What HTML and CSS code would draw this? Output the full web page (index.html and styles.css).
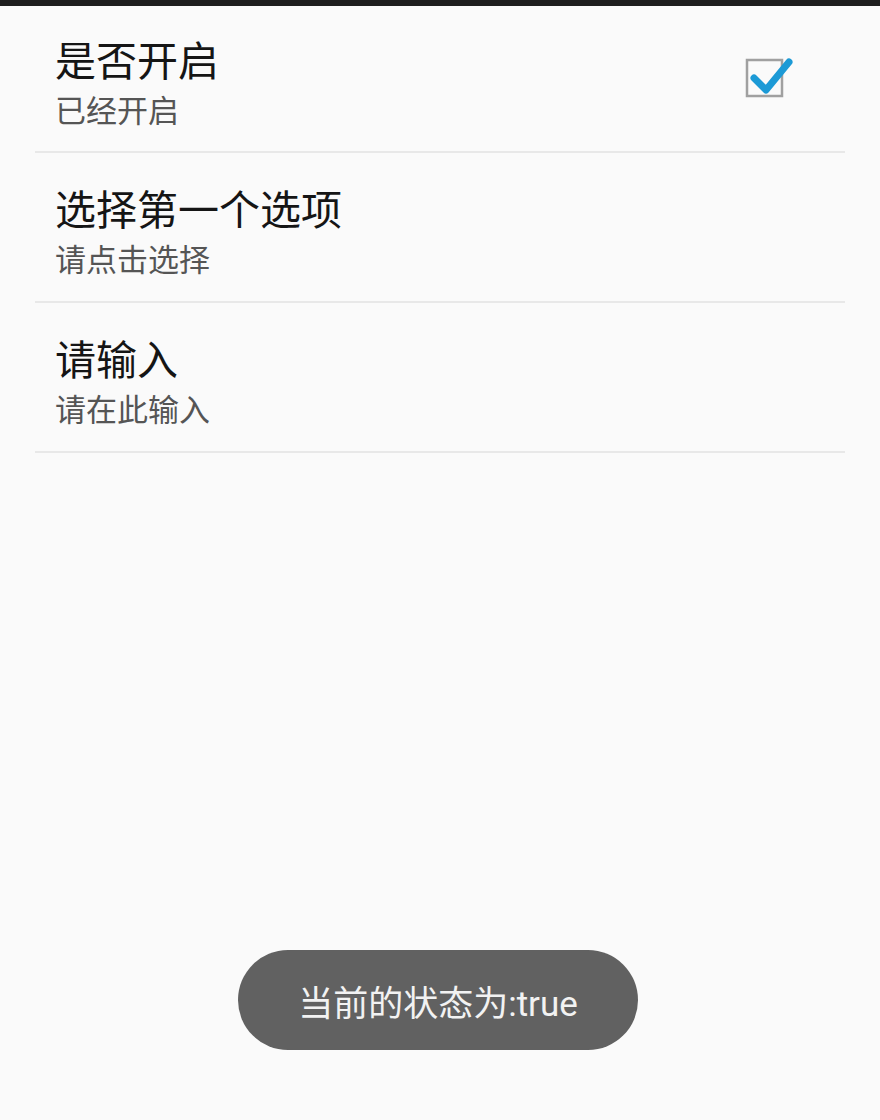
FILE: index.html
```html
<!DOCTYPE html>
<html lang="zh-CN">
<head>
  <meta charset="UTF-8">
  <meta name="viewport" content="width=device-width, initial-scale=1">
  <title>设置</title>
  <link rel="stylesheet" href="styles.css">
</head>
<body>
  <div class="status-bar"></div>

  <ul class="pref-list">
    <li class="pref">
      <div class="pref-text">
        <div class="pref-title">是否开启</div>
        <div class="pref-summary">已经开启</div>
      </div>
      <svg class="check" width="52" height="48" viewBox="0 0 52 48">
        <rect x="3" y="8" width="35" height="36" fill="#fafafa" stroke="#a0a0a0" stroke-width="2.5"/>
        <path d="M10 26 L22 38 L45 10" fill="none" stroke="#1c9ad6" stroke-width="7" stroke-linecap="round" stroke-linejoin="round"/>
      </svg>
    </li>
    <li class="pref">
      <div class="pref-text">
        <div class="pref-title">选择第一个选项</div>
        <div class="pref-summary">请点击选择</div>
      </div>
    </li>
    <li class="pref">
      <div class="pref-text">
        <div class="pref-title">请输入</div>
        <div class="pref-summary">请在此输入</div>
      </div>
    </li>
  </ul>

  <!-- toast -->
  <div class="toast">当前的状态为:true</div>
</body>
</html>
```

FILE: styles.css
```css
html, body {
  height: 100%;
}

body {
  margin: 0;
  background: #fafafa;
  font-family: "Noto Sans CJK SC", "Noto Sans", sans-serif;
  position: relative;
  overflow: hidden;
}

.status-bar {
  height: 6px;
  background: #1e1e1e;
}

.pref-list {
  list-style: none;
  margin: 0;
  padding: 0 35px;
}

.pref {
  display: flex;
  align-items: flex-start;
  justify-content: space-between;
  padding: 30px 20px 22px 20px;
  border-bottom: 2px solid #e8e8e8;
}

.pref:first-child {
  padding-top: 28px;
  padding-bottom: 21px;
}

.pref-title {
  font-size: 41px;
  line-height: 48px;
  color: #151515;
}

.pref-summary {
  font-size: 31px;
  line-height: 42px;
  margin-top: 6px;
  color: #555;
}

.check {
  margin-right: 29px;
  margin-top: 18px;
}

.toast {
  position: absolute;
  left: 238px;
  top: 950px;
  width: 400px;
  height: 100px;
  border-radius: 50px;
  background: #616161;
  color: #f2f2f2;
  font-family: "Roboto", "Noto Sans CJK SC", sans-serif;
  font-size: 35px;
  display: flex;
  align-items: center;
  justify-content: center;
}
```
